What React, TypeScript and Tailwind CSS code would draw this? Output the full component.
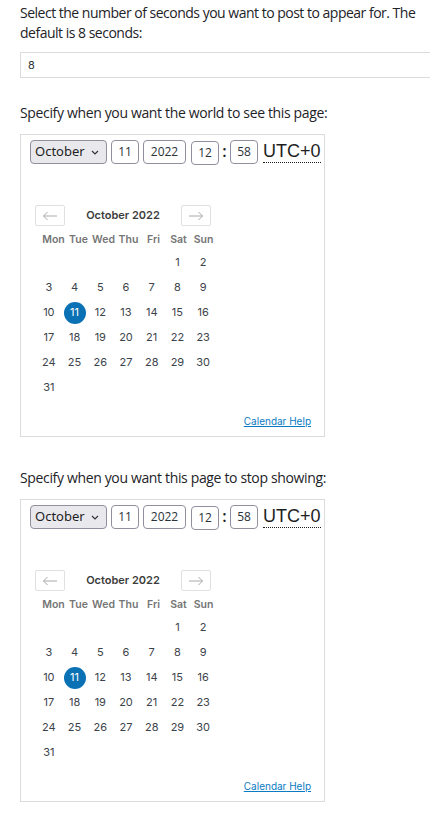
import React from 'react'

const weekDays = ['Mon', 'Tue', 'Wed', 'Thu', 'Fri', 'Sat', 'Sun']

// October 2022 starts on a Saturday
const days: (number | null)[] = [null, null, null, null, null, ...Array.from({ length: 31 }, (_, i) => i + 1)]

function Arrow({ dir }: { dir: 'left' | 'right' }) {
  return (
    <svg width="16" height="10" viewBox="0 0 16 10" fill="none" stroke="#a7aaad" strokeWidth="1">
      {dir === 'left' ? (
        <path d="M15 5H1.5M5.5 1L1.5 5l4 4" />
      ) : (
        <path d="M1 5h13.5M10.5 1l4 4-4 4" />
      )}
    </svg>
  )
}

function Schedule() {
  return (
    <div className="w-[305px] border border-[#dcdcde] pl-[9px] pt-[4px] pb-[8px] pr-[2px]">
      <div className="flex items-center h-[25px]">
        <div className="relative shrink-0 w-[77px] h-[24px] rounded-[4px] border border-[#8f8f9d] bg-[#e9e9ed] flex items-center pl-[4px] text-[13px] text-[#1e1e1e] font-['Noto_Sans',sans-serif]">
          October
          <svg className="absolute right-[7px] top-[9px]" width="8" height="5" viewBox="0 0 8 5" fill="none" stroke="#333" strokeWidth="1.2">
            <path d="M1 1l3 3 3-3" />
          </svg>
        </div>
        <input readOnly defaultValue="11" className="shrink-0 ml-[4px] w-[28px] h-[24px] rounded-[4px] border border-[#8f8f9d] text-center text-[12px] text-[#2c3338] outline-none" />
        <input readOnly defaultValue="2022" className="shrink-0 ml-[4px] w-[43px] h-[24px] rounded-[4px] border border-[#8f8f9d] text-center text-[12px] text-[#2c3338] outline-none" />
        <input readOnly defaultValue="12" className="shrink-0 ml-[5px] mt-[2px] w-[28px] h-[24px] rounded-[4px] border border-[#8f8f9d] text-center text-[12px] text-[#2c3338] outline-none" />
        <span className="shrink-0 w-[11px] text-center text-[16px] font-semibold leading-none text-[#1e1e1e] -mt-[2px]">:</span>
        <input readOnly defaultValue="58" className="shrink-0 w-[28px] h-[24px] rounded-[4px] border border-[#8f8f9d] text-center text-[12px] text-[#2c3338] outline-none" />
        <span className="shrink-0 ml-[5px] text-[18px] leading-[22px] text-[#1e1e1e] font-['Liberation_Sans',Arial,sans-serif] border-b border-dotted border-[#1e1e1e] -mt-[1px]">
          UTC+0
        </span>
      </div>

      <div className="mt-[41px] ml-[5px] font-['Inter',sans-serif]">
        <div className="flex items-center w-[176px] h-[21px]">
          <button className="w-[30px] h-[21px] rounded-[2px] border border-[#e0e0e0] flex items-center justify-center">
            <Arrow dir="left" />
          </button>
          <div className="flex-1 text-center text-[11px] font-semibold text-[#3c3c3c]">October 2022</div>
          <button className="w-[30px] h-[21px] rounded-[2px] border border-[#e0e0e0] flex items-center justify-center">
            <Arrow dir="right" />
          </button>
        </div>
        <div className="ml-[1px] mt-[4px] w-[180px]">
          <div className="ml-[5px] grid grid-cols-7 h-[20px] items-center">
            {weekDays.map((d) => (
              <div key={d} className="text-center text-[10.5px] font-semibold text-[#757575]">
                {d}
              </div>
            ))}
          </div>
          <div className="grid grid-cols-7">
            {days.map((d, i) => (
              <div key={i} className="h-[25px] flex items-center justify-center text-[11px] text-[#3c434a]">
                {d === 11 ? (
                  <span className="w-[22px] h-[22px] rounded-full bg-[#0a72b4] text-white flex items-center justify-center">
                    11
                  </span>
                ) : (
                  d
                )}
              </div>
            ))}
          </div>
        </div>
      </div>

      <div className="mt-[12px] pr-[11px] text-right leading-[14px]">
        <a href="#" className="text-[10px] text-[#0a7bc2] underline font-['Inter',sans-serif]">
          Calendar Help
        </a>
      </div>
    </div>
  )
}

export default function App() {
  return (
    <div className="w-[430px] h-[817px] overflow-hidden bg-white pl-[20px] pt-[3px] font-['Open_Sans','Noto_Sans',sans-serif] text-[#1d2327]">
      <p className="text-[14px] leading-[20px] tracking-[-0.5px] w-[420px]">
        Select the number of seconds you want to post to appear for. The default is 8 seconds:
      </p>
      <input
        readOnly
        defaultValue="8"
        className="mt-[9px] block w-[420px] h-[26px] border border-[#dcdcde] pl-[7px] text-[11px] text-[#2c3338] font-['Inter',sans-serif] outline-none"
      />

      <p className="mt-[25px] text-[14px] leading-[20px] tracking-[-0.35px]">
        Specify when you want the world to see this page:
      </p>
      <div className="mt-[11px]">
        <Schedule />
      </div>

      <p className="mt-[31px] text-[14px] leading-[20px] tracking-[-0.35px]">
        Specify when you want this page to stop showing:
      </p>
      <div className="mt-[11px]">
        <Schedule />
      </div>
    </div>
  )
}
